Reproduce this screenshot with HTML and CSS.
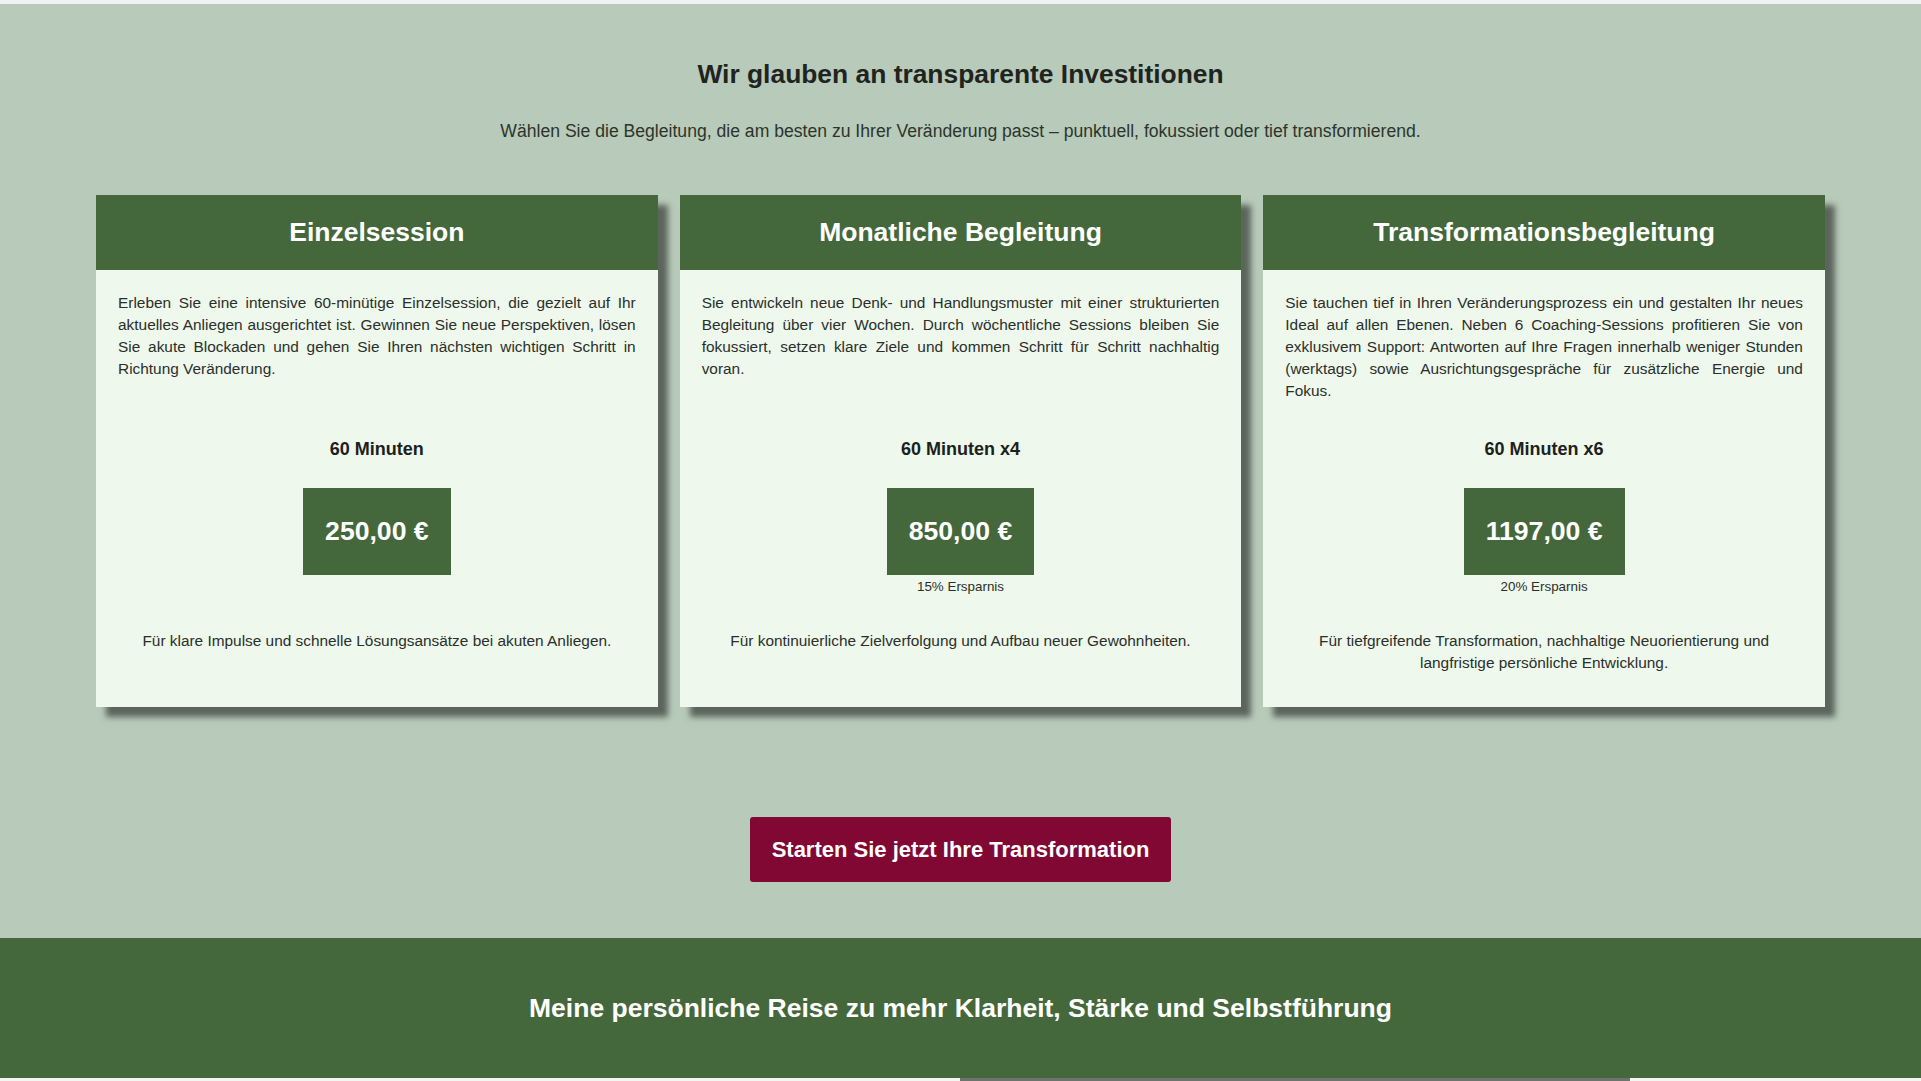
FILE: index.html
```html
<!DOCTYPE html>
<html lang="de">
<head>
<meta charset="utf-8">
<title>Preise</title>
<link rel="stylesheet" href="styles.css">
</head>
<body>
<div class="top-strip"></div>
<section class="pricing">
  <h2 class="pricing-title">Wir glauben an transparente Investitionen</h2>
  <p class="pricing-sub">Wählen Sie die Begleitung, die am besten zu Ihrer Veränderung passt – punktuell, fokussiert oder tief transformierend.</p>
  <div class="cards">
    <div class="card">
      <div class="card-head">Einzelsession</div>
      <div class="card-body">
        <p class="desc">Erleben Sie eine intensive 60-minütige Einzelsession, die gezielt auf Ihr aktuelles Anliegen ausgerichtet ist. Gewinnen Sie neue Perspektiven, lösen Sie akute Blockaden und gehen Sie Ihren nächsten wichtigen Schritt in Richtung Veränderung.</p>
        <div class="duration">60 Minuten</div>
        <div class="price">250,00 €</div>
        <div class="savings"></div>
        <p class="note">Für klare Impulse und schnelle Lösungsansätze bei akuten Anliegen.</p>
      </div>
    </div>
    <div class="card">
      <div class="card-head">Monatliche Begleitung</div>
      <div class="card-body">
        <p class="desc">Sie entwickeln neue Denk- und Handlungsmuster mit einer strukturierten Begleitung über vier Wochen. Durch wöchentliche Sessions bleiben Sie fokussiert, setzen klare Ziele und kommen Schritt für Schritt nachhaltig voran.</p>
        <div class="duration">60 Minuten x4</div>
        <div class="price">850,00 €</div>
        <div class="savings">15% Ersparnis</div>
        <p class="note">Für kontinuierliche Zielverfolgung und Aufbau neuer Gewohnheiten.</p>
      </div>
    </div>
    <div class="card">
      <div class="card-head">Transformationsbegleitung</div>
      <div class="card-body">
        <p class="desc">Sie tauchen tief in Ihren Veränderungsprozess ein und gestalten Ihr neues Ideal auf allen Ebenen. Neben 6 Coaching-Sessions profitieren Sie von exklusivem Support: Antworten auf Ihre Fragen innerhalb weniger Stunden (werktags) sowie Ausrichtungsgespräche für zusätzliche Energie und Fokus.</p>
        <div class="duration">60 Minuten x6</div>
        <div class="price">1197,00 €</div>
        <div class="savings">20% Ersparnis</div>
        <p class="note">Für tiefgreifende Transformation, nachhaltige Neuorientierung und langfristige persönliche Entwicklung.</p>
      </div>
    </div>
  </div>
  <div class="cta-wrap">
    <a class="cta" href="#">Starten Sie jetzt Ihre Transformation</a>
  </div>
</section>
<section class="journey">
  <h2 class="journey-title">Meine persönliche Reise zu mehr Klarheit, Stärke und Selbstführung</h2>
</section>
<div class="next-strip"><div class="next-img"></div></div>
</body>
</html>
```
FILE: styles.css
```css
* {
  box-sizing: border-box;
}

html, body {
  margin: 0;
  padding: 0;
}

body {
  font-family: "Liberation Sans", Arial, sans-serif;
  background: #b8cab9;
  color: #222;
  overflow: hidden;
}

.top-strip {
  height: 4px;
  background: #f1f3f1;
}

.pricing {
  padding: 55px 0 56px;
}

.pricing-title {
  margin: 0;
  text-align: center;
  font-size: 26.4px;
  line-height: 30px;
  font-weight: bold;
  color: #1f241f;
}

.pricing-sub {
  margin: 32px 0 0;
  text-align: center;
  font-size: 17.6px;
  line-height: 20px;
  color: #2c352c;
}

.cards {
  width: 90%;
  margin: 54px auto 0;
  display: flex;
  gap: 22px;
  align-items: stretch;
}

.card {
  flex: 1 1 0;
  background: #eef8ec;
  box-shadow: 10px 10px 6px rgba(0, 0, 0, 0.5);
  display: flex;
  flex-direction: column;
}

.card-head {
  background: #45673c;
  color: #fff;
  text-align: center;
  font-size: 26.5px;
  font-weight: bold;
  line-height: 31px;
  padding: 22px 10px;
}

.card-body {
  padding: 22px 22px 33px;
  display: flex;
  flex-direction: column;
  align-items: center;
  flex: 1;
}

.desc {
  margin: 0;
  align-self: stretch;
  min-height: 113px;
  font-size: 15.4px;
  line-height: 22px;
  text-align: justify;
  color: #2b2f2b;
}

.duration {
  margin-top: 33px;
  font-size: 18px;
  line-height: 22px;
  font-weight: bold;
  color: #1c211c;
}

.price {
  margin-top: 28px;
  background: #45673c;
  color: #fff;
  font-size: 26.6px;
  line-height: 31px;
  font-weight: bold;
  padding: 28px 22px;
}

.savings {
  margin-top: 4px;
  min-height: 15px;
  font-size: 13.4px;
  line-height: 15px;
  color: #2b2f2b;
}

.note {
  margin: 36px 0 0;
  font-size: 15.4px;
  line-height: 22px;
  text-align: center;
  color: #2b2f2b;
}

.cta-wrap {
  display: flex;
  justify-content: center;
  margin-top: 110px;
}

.cta {
  display: inline-block;
  background: #800833;
  color: #fff;
  text-decoration: none;
  font-size: 22px;
  line-height: 25px;
  font-weight: bold;
  padding: 20px 22px;
  border-radius: 3px;
}

.journey {
  background: #45673c;
  height: 140px;
  display: flex;
  align-items: center;
  justify-content: center;
}

.journey-title {
  margin: 0;
  color: #fff;
  font-size: 26.5px;
  line-height: 31px;
  font-weight: bold;
}

.next-strip {
  height: 10px;
  background: #f4f5f4;
  display: flex;
}

.next-img {
  margin-left: 960px;
  width: 670px;
  background: #6f736f;
}
```
